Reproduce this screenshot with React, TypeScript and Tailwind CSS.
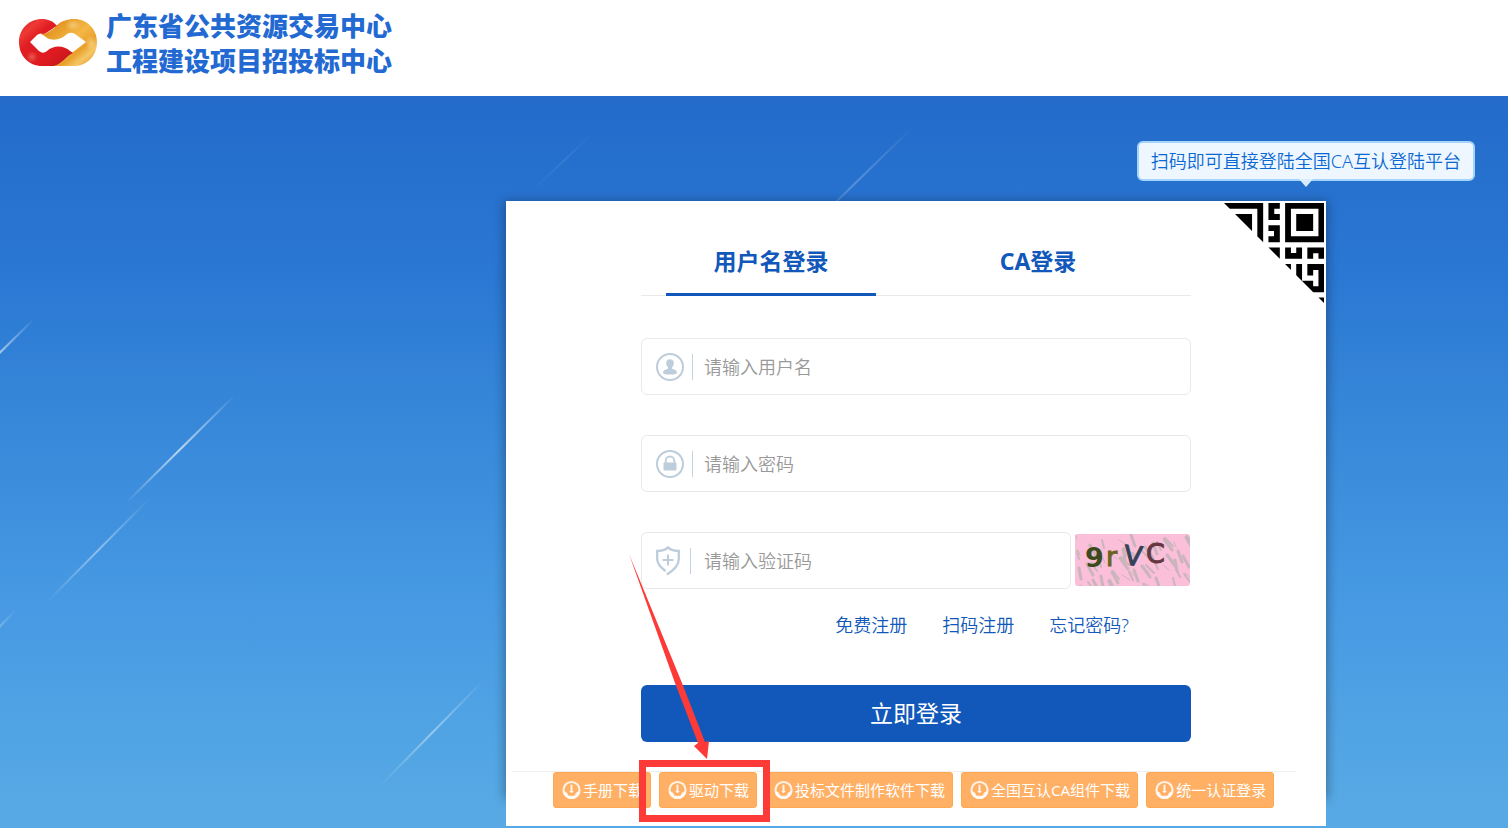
import React, { useState } from 'react';

type LoginMode = 'user' | 'ca';

const qrRows = [
  '#######.##.#######',
  '......#.#..#.....#',
  '..###.#.##.#.###.#',
  '..###.#....#.###.#',
  '..###.#.##.#.###.#',
  '......#..#.#.....#',
  '#######.##.#######',
  '..................',
  '........##.#.#.###',
  '........##.###.#.#',
  '..................',
  '...........#.#.###',
  '.............#.#.#',
  '.............#...#',
  '..............##.#',
  '...............###',
  '..................',
  '.................#',
];

const qrPath = qrRows
  .flatMap((row, y) => row.split('').map((cell, x) => (cell === '#' ? `M${x} ${y}h1.05v1.05h-1.05z` : '')))
  .join('');

// x1, y1 is the lower left end of each streak
const streaks = [
  { x1: -34, y1: 290, x2: 34, y2: 223, opacity: 0.55 },
  { x1: 126, y1: 407, x2: 235, y2: 299, opacity: 0.65 },
  { x1: 46, y1: 507, x2: 150, y2: 402, opacity: 0.4 },
  { x1: -40, y1: 571, x2: 17, y2: 513, opacity: 0.4 },
  { x1: 380, y1: 690, x2: 484, y2: 584, opacity: 0.4 },
  { x1: 535, y1: 92, x2: 594, y2: 36, opacity: 0.08 },
  { x1: 800, y1: 141, x2: 914, y2: 30, opacity: 0.22 },
];

const downloads = ['手册下载', '驱动下载', '投标文件制作软件下载', '全国互认CA组件下载', '统一认证登录'];

const Logo = () => (
  <svg width="80" height="50" viewBox="0 0 80 50" aria-hidden="true">
    <defs>
      <linearGradient id="logoRed" x1="0" y1="0" x2="1" y2="1">
        <stop offset="0" stopColor="#d5181e" />
        <stop offset="0.2" stopColor="#ee3a36" />
        <stop offset="0.35" stopColor="#e01d22" />
        <stop offset="0.7" stopColor="#dd1b21" />
        <stop offset="1" stopColor="#b5151a" />
      </linearGradient>
      <linearGradient id="logoGold" x1="0" y1="0" x2="1" y2="1">
        <stop offset="0" stopColor="#d97b16" />
        <stop offset="0.3" stopColor="#e9a02c" />
        <stop offset="0.5" stopColor="#f4b846" />
        <stop offset="0.68" stopColor="#e9a02a" />
        <stop offset="0.8" stopColor="#f5c765" />
        <stop offset="1" stopColor="#dd8a1a" />
      </linearGradient>
      <radialGradient id="logoShine">
        <stop offset="0" stopColor="#ffe9b0" stopOpacity="0.5" />
        <stop offset="1" stopColor="#ffe9b0" stopOpacity="0" />
      </radialGradient>
    </defs>
    <path
      d="M25 16C30 15 36 11 38 8C43 3 49 1 56 1C69 1 79 11 79 24C79 38 69 48 56 48H36C44 45 48 38 55 34L68 24L57 16Q53 13.500 49 16C43 22 35 23 29 20Q26 17 22 15.500Z"
      fill="url(#logoGold)"
    />
    <path
      d="M24 1C30 1 35 3 39 8C36 9 30 15 25 16Q22 14.500 19 17L12 24L21 33Q25 36.500 29 33C35 27 46 27 52 33L55 35C48 38 44 46 36 48H24C11 48 1 38 1 24C1 11 11 1 24 1Z"
      fill="url(#logoRed)"
    />
    <ellipse cx="55" cy="7" rx="8" ry="6" fill="url(#logoShine)" />
    <ellipse cx="73" cy="25" rx="6" ry="8" fill="url(#logoShine)" />
    <ellipse cx="14" cy="39" rx="6" ry="6" fill="url(#logoShine)" opacity="0.6" />
  </svg>
);

const UserIcon = () => (
  <svg width="28" height="28" viewBox="0 0 28 28" fill="none" aria-hidden="true">
    <circle cx="14" cy="14" r="13" stroke="#bdcddb" strokeWidth="2" />
    <path
      d="M14 6.300c-2.300 0-3.800 1.600-3.800 3.900 0 1.600.7 3 1.700 3.900v1.600c-2.300.8-4.800 1.500-4.800 3.800 0 1.500 1.700 2 6.900 2s6.900-.5 6.900-2c0-2.300-2.500-3-4.800-3.800v-1.600c1-.9 1.700-2.300 1.700-3.900 0-2.300-1.500-3.900-3.800-3.900z"
      fill="#bdcddb"
    />
  </svg>
);

const LockIcon = () => (
  <svg width="28" height="28" viewBox="0 0 28 28" fill="none" aria-hidden="true">
    <circle cx="14" cy="14" r="13" stroke="#bdcddb" strokeWidth="2" />
    <rect x="7.500" y="12.500" width="13" height="8" rx="1" fill="#bdcddb" />
    <path d="M9.700 13v-2.200a4.300 4.300 0 0 1 8.600 0V13" stroke="#bdcddb" strokeWidth="1.800" />
  </svg>
);

const ShieldIcon = () => (
  <svg width="26" height="30" viewBox="0 0 26 30" fill="none" stroke="#bdcddb" aria-hidden="true">
    <path
      d="M9.500 25C4 21 1.200 17.500 1.200 13V5C5.500 5 9 4 12 1.500C15 4 18.500 5 22.800 5v8c0 6-4.500 11-12 15.500"
      strokeWidth="2.300"
    />
    <path d="M12 8.500v11M6.500 14h11" strokeWidth="2" />
  </svg>
);

const DownloadIcon = () => (
  <svg width="19" height="20" viewBox="0 0 20 20" fill="none" aria-hidden="true">
    <circle cx="10" cy="10" r="8.500" stroke="#fff" strokeOpacity="0.85" strokeWidth="2.200" />
    <path d="M2 11l3 1.500 2 3.500h6l2-3.500 3-1.500c.5 4.500-3 8-8 8s-8.500-3.500-8-8z" fill="#fff" fillOpacity="0.85" />
    <path d="M9 4.500h2v6.500h1.500L10 13.500l-2.500-2.500H9z" fill="#fff" fillOpacity="0.9" />
  </svg>
);

const QrCorner = () => (
  <svg width="100" height="100" viewBox="0 0 18 18" className="block" aria-hidden="true">
    <defs>
      <clipPath id="corner">
        <path d="M0 0H18V18Z" />
      </clipPath>
    </defs>
    <path d={qrPath} clipPath="url(#corner)" />
  </svg>
);

const Captcha = () => (
  <svg width="115" height="52" viewBox="0 0 115 52" className="block rounded-[3px]">
    <rect width="115" height="52" fill="#fbbfda" />
    <g stroke="#cbb5bd" strokeLinecap="round">
      {Array.from({ length: 66 }, (_, i) => {
        const x = (i * 43 + (i % 7) * 11) % 118;
        const y = (i * 31 + (i % 5) * 7) % 54;
        const dx = 2 + (i % 4) * 2;
        return <line key={i} x1={x} y1={y} x2={x + dx} y2={y + 5 + (i % 3) * 3} strokeWidth={1 + (i % 3)} />;
      })}
    </g>
    <g fontFamily="DejaVu Sans" fontSize="27">
      <text x="10" y="33" fontWeight="bold" fill="#3d4a1c">9</text>
      <text x="31" y="32" fill="#6c6220" stroke="#6c6220">r</text>
      <text x="49" y="31" fill="#354157" stroke="#354157" transform="rotate(6 56 22)">V</text>
      <text x="71" y="29" fill="#653741" stroke="#653741">C</text>
    </g>
  </svg>
);

interface FieldProps {
  id: string;
  type?: string;
  placeholder: string;
  icon: React.ReactNode;
}

const Field: React.FC<FieldProps> = ({ id, type = 'text', placeholder, icon }) => (
  <div className="flex h-[57px] flex-1 items-center rounded-md border border-[#e9e9e9] bg-white pl-[14px]">
    <label htmlFor={id} aria-label={placeholder} className="flex w-12 shrink-0 items-center gap-2">
      {icon}
      <span className="h-[26px] w-px bg-[#c3d3e0]" />
    </label>
    <input
      id={id}
      type={type}
      placeholder={placeholder}
      className="h-full min-w-0 flex-1 bg-transparent text-[18px] font-[350] text-gray-700 outline-none placeholder:text-[#999]"
    />
  </div>
);

const App: React.FC = () => {
  const [mode, setMode] = useState<LoginMode>('user');

  const tabClass = (active: boolean) =>
    `-mb-px w-[210px] border-b-[3px] pt-[42px] pb-[14px] text-[23px] leading-9 font-bold text-[#1158ba] ${
      active ? 'border-[#1158ba]' : 'border-transparent'
    }`;

  return (
    <div className="flex min-h-screen flex-col bg-white font-['Noto_Sans','Noto_Sans_CJK_SC',sans-serif]">
      <header className="flex h-24 items-start gap-2 pt-[7px] pl-[18px]">
        <div className="pt-[11px]">
          <Logo />
        </div>
        <h1 className="font-['Noto_Sans_CJK_SC',sans-serif] text-[26px] leading-[35px] font-black text-[#2369d2]">
          广东省公共资源交易中心
          <br />
          工程建设项目招投标中心
        </h1>
      </header>

      <main className="relative flex flex-1 flex-col items-end overflow-hidden bg-[linear-gradient(180deg,#246bca_0%,#2a78d3_25%,#3889da_46%,#479ae3_70%,#56a9e4_96%)] pt-[45px] pb-[2px]">
        {/* Background streaks */}
        <svg className="absolute inset-0 h-full w-full" aria-hidden="true">
          <defs>
            {streaks.map((s, i) => (
              <linearGradient key={i} id={`streak${i}`} gradientUnits="userSpaceOnUse" x1={s.x1} y1={s.y1} x2={s.x2} y2={s.y2}>
                <stop offset="0" stopColor="#fff" stopOpacity="0" />
                <stop offset="0.5" stopColor="#fff" stopOpacity={s.opacity} />
                <stop offset="1" stopColor="#fff" stopOpacity="0" />
              </linearGradient>
            ))}
          </defs>
          {streaks.map((s, i) => (
            <line key={i} x1={s.x1} y1={s.y1} x2={s.x2} y2={s.y2} stroke={`url(#streak${i})`} strokeWidth="2" />
          ))}
        </svg>

        {/* Scan hint */}
        <div className="relative mr-[33px] mb-5 rounded-md border-2 border-[#a5d4fb] bg-[#eef7ff] px-3 text-[18px] leading-9 font-[350] text-[#0a68d4]">
          扫码即可直接登陆全国CA互认登陆平台
          <svg className="absolute top-full left-1/2 -translate-x-1/2" width="14" height="8" viewBox="0 0 14 8" aria-hidden="true">
            <path d="M0 0H14L7 8Z" fill="#d9edff" />
          </svg>
        </div>

        <div className="relative mr-[182px] w-full max-w-[820px]">
          <form
            className="bg-white px-[135px] pb-[53px] shadow-[0_2px_10px_2px_rgba(0,0,0,0.3)]"
            onSubmit={e => e.preventDefault()}
          >
            <a href="#qr" aria-label="扫码登录" className="absolute top-[2px] right-[2px]">
              <QrCorner />
            </a>

            <div role="tablist" className="mb-[42px] flex gap-[57px] border-b border-[#e9e9e9] px-[25px]">
              <button type="button" role="tab" aria-selected={mode === 'user'} onClick={() => setMode('user')} className={tabClass(mode === 'user')}>
                用户名登录
              </button>
              <button type="button" role="tab" aria-selected={mode === 'ca'} onClick={() => setMode('ca')} className={tabClass(mode === 'ca')}>
                CA登录
              </button>
            </div>

            <div className="flex flex-col gap-10">
              <div className="flex">
                <Field id="username" placeholder="请输入用户名" icon={<UserIcon />} />
              </div>
              <div className="flex">
                <Field id="password" type="password" placeholder="请输入密码" icon={<LockIcon />} />
              </div>
              <div className="flex gap-1 pr-px">
                <Field id="captcha" placeholder="请输入验证码" icon={<ShieldIcon />} />
                <button type="button" aria-label="刷新验证码" className="self-start pt-[2px]">
                  <Captcha />
                </button>
              </div>
            </div>

            <div className="mt-[22px] mb-[46px] flex justify-end gap-[35px] pr-[62px] text-[18px] leading-7 font-[350] text-[#1158ba]">
              <a href="#register">免费注册</a>
              <a href="#scan-register">扫码注册</a>
              <a href="#forgot">忘记密码?</a>
            </div>

            <button type="submit" className="h-[57px] w-full rounded-md bg-[#1158ba] text-[23px] text-white">
              立即登录
            </button>
          </form>

          {/* Downloads */}
          <div className="relative -mt-6 bg-white pr-[30px] pb-[18px] pl-[6px]">
            <nav className="flex gap-2 border-t border-[#f0f0f0] pl-[41px]">
              {downloads.map(name => (
                <a
                  key={name}
                  href="#download"
                  className="flex h-[36px] shrink-0 items-center gap-[2px] rounded-[3px] border border-[#ffa84f] bg-[#ffb065] pr-[7px] pl-2 text-[15px] whitespace-nowrap text-white"
                >
                  <DownloadIcon />
                  {name}
                </a>
              ))}
            </nav>
          </div>

          {/* Highlight over the driver download */}
          <svg className="pointer-events-none absolute bottom-[3px] left-[122px]" width="144" height="270" viewBox="0 0 144 270" aria-hidden="true">
            <path d="M1 1L54 130L77 189L81 188L79 206L66 193L70 190L47 130Z" fill="#fc3a38" />
            <rect x="14.500" y="210.500" width="124" height="55" fill="none" stroke="#fc3a38" strokeWidth="7" />
          </svg>
        </div>
      </main>
    </div>
  );
};

export default App;
